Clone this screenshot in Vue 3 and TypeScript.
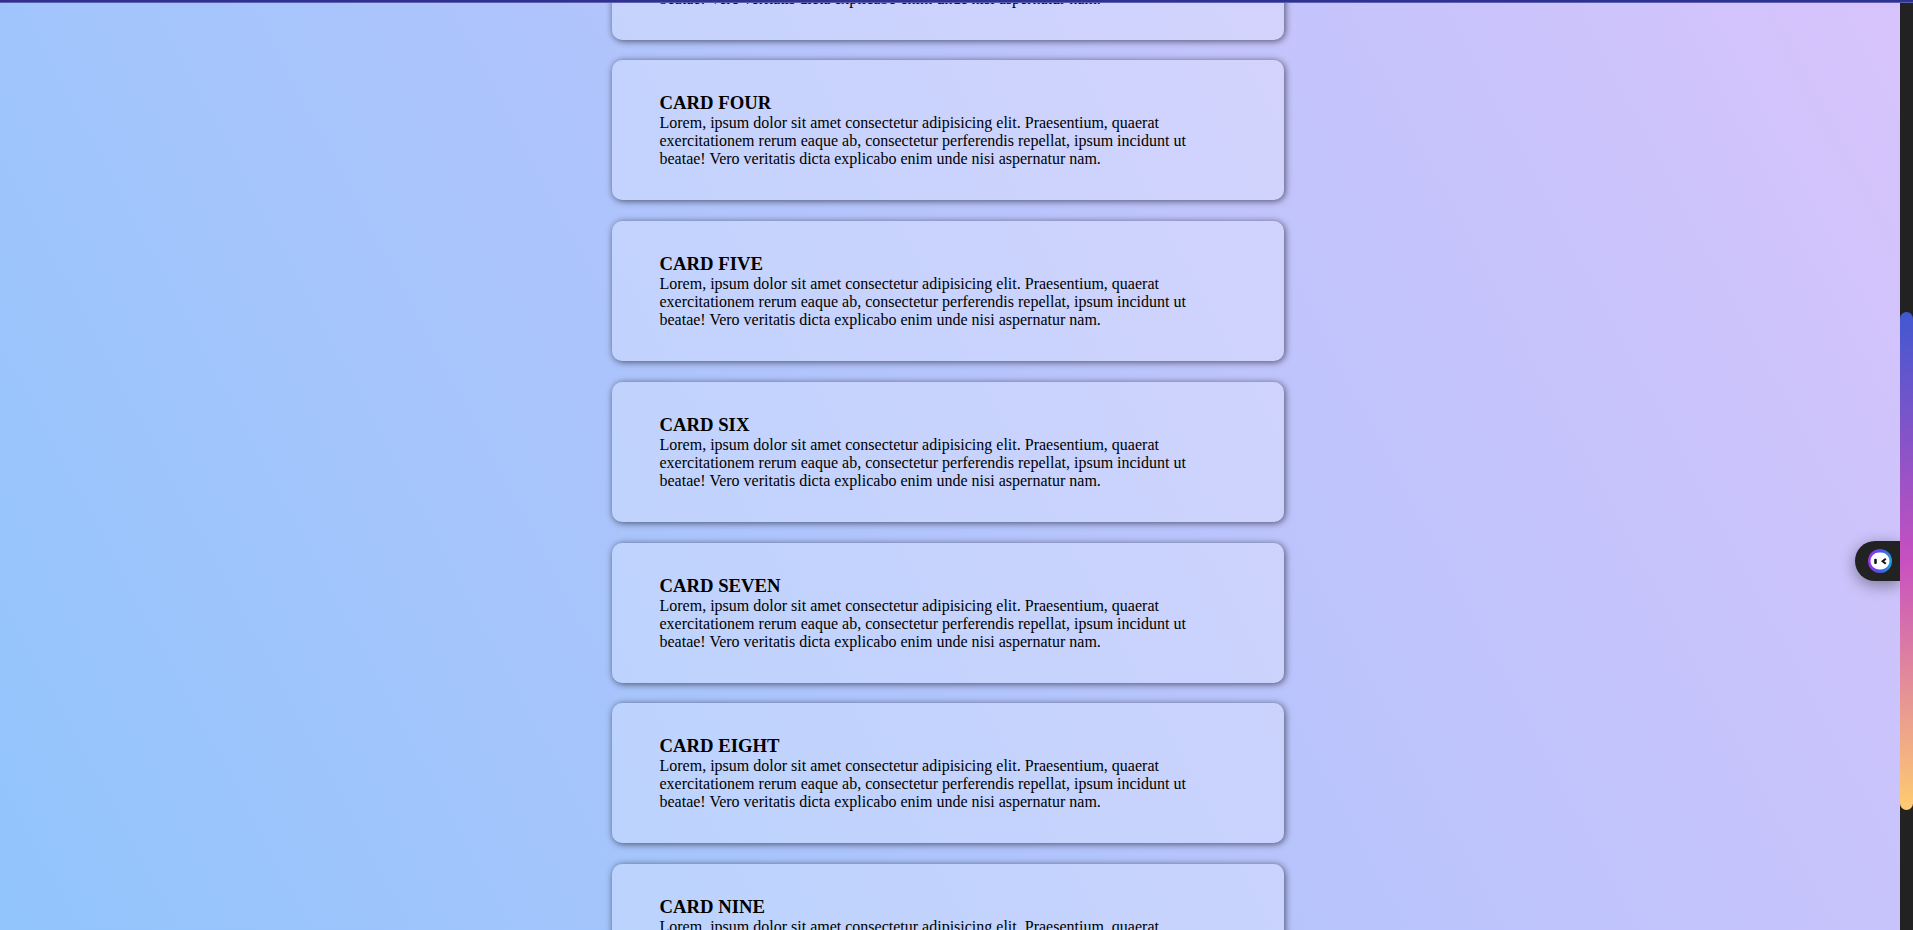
<script setup lang="ts">
import { computed, onMounted, onUnmounted, ref } from 'vue'

const names: string[] = ['ONE', 'TWO', 'THREE', 'FOUR', 'FIVE', 'SIX', 'SEVEN', 'EIGHT', 'NINE']
const body =
  'Lorem, ipsum dolor sit amet consectetur adipisicing elit. Praesentium, quaerat exercitationem rerum eaque ab, consectetur perferendis repellat, ipsum incidunt ut beatae! Vero veritatis dicta explicabo enim unde nisi aspernatur nam.'

const scroller = ref<HTMLElement | null>(null)
const position = ref(583)
const viewHeight = ref(930)
const pageHeight = ref(1737)

const thumbStyle = computed(() => ({
  top: `${(position.value / pageHeight.value) * 100}%`,
  height: `${(viewHeight.value / pageHeight.value) * 100}%`
}))

function measure(): void {
  const el = scroller.value
  if (!el) return
  position.value = el.scrollTop
  viewHeight.value = el.clientHeight
  pageHeight.value = el.scrollHeight
}

onMounted(() => {
  if (scroller.value) scroller.value.scrollTop = position.value
  measure()
  window.addEventListener('resize', measure)
})
onUnmounted(() => window.removeEventListener('resize', measure))
</script>

<template>
  <div class="shell">
    <div class="top-line"></div>
    <main ref="scroller" class="scroller" @scroll="measure">
      <div class="page">
        <section class="cards">
          <article v-for="name in names" :key="name" class="card">
            <h3>CARD {{ name }}</h3>
            <p>{{ body }}</p>
          </article>
        </section>
      </div>
    </main>
    <div class="track">
      <div class="thumb" :style="thumbStyle"></div>
      <button class="assistant" type="button" aria-label="Assistant">
        <svg width="24" height="24" viewBox="0 0 24 24" aria-hidden="true">
          <defs>
            <linearGradient id="ring" x1="0" y1="0.6" x2="1" y2="0.7">
              <stop offset="0" stop-color="#a034e8" />
              <stop offset="0.5" stop-color="#4a50f0" />
              <stop offset="1" stop-color="#18a8dc" />
            </linearGradient>
          </defs>
          <circle cx="12" cy="12" r="12" fill="url(#ring)" />
          <rect x="2.5" y="3.6" width="19" height="17" rx="8.5" fill="#fff" />
          <rect x="6.2" y="9.7" width="2.6" height="5.3" rx="1" fill="#151515" />
          <path d="M17.8 9.8 L14.6 12.3 L17.8 14.8" fill="none" stroke="#151515" stroke-width="2" />
        </svg>
      </button>
    </div>
  </div>
</template>

<style>
body {
  margin: 0;
}
</style>

<style scoped>
.shell {
  display: flex;
  height: 100vh;
  overflow: hidden;
  position: relative;
  font-family: 'Liberation Serif', 'Times New Roman', serif;
  color: #000;
}

.top-line {
  position: absolute;
  inset: 0 0 auto;
  z-index: 2;
  height: 2px;
  background: #2e3192;
  border-bottom: 1px solid #5c5fae;
}

.scroller {
  flex: 1;
  min-width: 0;
  overflow-y: scroll;
  scrollbar-width: none;
}

.page {
  padding: 161px 5px 150px 0;
  background: linear-gradient(62deg, #8ec5fc 0%, #e0c3fc 100%);
}

.cards {
  display: flex;
  flex-direction: column;
  justify-content: space-between;
  min-height: 1426px;
  max-width: 672px;
  margin: 0 auto;
}

.card {
  padding: 32px 48px;
  border-radius: 10px;
  background: rgba(255, 255, 255, 0.25);
  box-shadow: 1px 1px 7px rgba(0, 0, 0, 0.6);
}

h3 {
  margin: 0;
  line-height: 22px;
}

p {
  margin: 0;
  font-size: 16px;
  line-height: 18px;
}

.track {
  position: relative;
  width: 13px;
  background: #222;
}

.thumb {
  position: absolute;
  left: 0;
  width: 100%;
  border-radius: 7px;
  background: linear-gradient(#4158d0 0%, #c850c0 50%, #ffcc70 100%);
}

.assistant {
  position: absolute;
  right: 100%;
  top: calc(50% + 76px);
  display: flex;
  align-items: center;
  width: 45px;
  height: 40px;
  padding: 0 0 0 13px;
  border: 0;
  border-radius: 20px 0 0 20px;
  background: #222;
  box-shadow: 0 4px 16px rgba(0, 0, 0, 0.4);
  clip-path: inset(-30px 0 -30px -30px);
  cursor: pointer;
}
</style>
